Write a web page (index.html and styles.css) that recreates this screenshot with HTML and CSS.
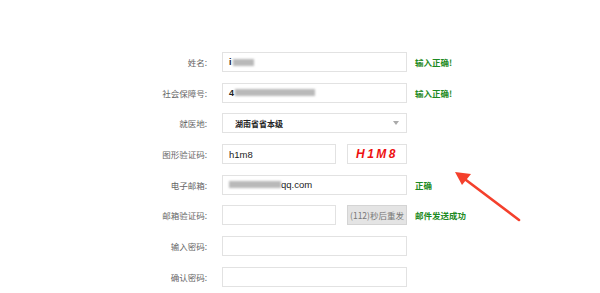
FILE: index.html
```html
<!DOCTYPE html>
<html lang="zh">
<head>
<meta charset="utf-8">
<link rel="stylesheet" href="styles.css">
</head>
<body>
<div class="page">
  <form class="form">
    <div class="row">
      <label class="lbl">姓名:</label>
      <div class="field"><span class="dark">i</span><span class="blur" style="width:21px"></span></div>
      <span class="msg">输入正确!</span>
    </div>
    <div class="row">
      <label class="lbl">社会保障号:</label>
      <div class="field"><span class="dark">4</span><span class="blur" style="width:80px"></span></div>
      <span class="msg">输入正确!</span>
    </div>
    <div class="row">
      <label class="lbl">就医地:</label>
      <div class="field select"><span class="sel-text">湖南省省本级</span><span class="caret"></span></div>
      <span></span>
    </div>
    <div class="row">
      <label class="lbl">图形验证码:</label>
      <div class="split">
        <div class="field short"><span class="val">h1m8</span></div>
        <div class="captcha">H1M8</div>
      </div>
      <span></span>
    </div>
    <div class="row">
      <label class="lbl">电子邮箱:</label>
      <div class="field"><span class="blur" style="width:52px"></span><span class="val">qq.com</span></div>
      <span class="msg">正确</span>
    </div>
    <div class="row">
      <label class="lbl">邮箱验证码:</label>
      <div class="split">
        <div class="field short"></div>
        <div class="resend">(112)秒后重发</div>
      </div>
      <span class="msg">邮件发送成功</span>
    </div>
    <div class="row">
      <label class="lbl">输入密码:</label>
      <div class="field"></div>
      <span></span>
    </div>
    <div class="row">
      <label class="lbl">确认密码:</label>
      <div class="field"></div>
      <span></span>
    </div>
  </form>
  <svg class="arrow" width="600" height="293" viewBox="0 0 600 293">
    <line x1="519" y1="220" x2="462" y2="177" stroke="#f4402c" stroke-width="2.6" stroke-linecap="round"/>
    <polygon points="455,172 471,174 462,185" fill="#f4402c"/>
  </svg>
</div>
</body>
</html>
```
FILE: styles.css
```css
* { box-sizing: border-box; }
html, body { margin: 0; padding: 0; background: #fff; }
body { font-family: "Microsoft YaHei", "Noto Sans CJK SC", "Liberation Sans", sans-serif; }
.page { position: relative; width: 600px; height: 293px; overflow: hidden; }
.form {
  display: grid;
  grid-template-columns: 207px 200px 120px;
  row-gap: 10.7px;
  padding-top: 52px;
}
.row { display: contents; }
.lbl {
  height: 20px;
  display: flex; align-items: center; justify-content: flex-end;
  font-size: 8.5px; color: #666;
}
.row > .field, .row > .split { margin-left: 15px; }
.field {
  height: 20px;
  border: 1px solid #e2e2e2;
  background: #fff;
  display: flex; align-items: center;
  padding-left: 6px;
  font-family: "Liberation Sans", "Noto Sans CJK SC", sans-serif;
  font-size: 10px; color: #222;
}
.field.short { width: 114px; }
.split { display: flex; gap: 11px; height: 20px; }
.dark { font-size: 9px; font-weight: bold; color: #222; margin-right: 1px; }
.blur { display: inline-block; height: 7px; background: #b9b9b9; filter: blur(1.2px); }
.val { font-size: 9.5px; color: #222; }
.msg {
  height: 20px;
  display: flex; align-items: center;
  margin-left: 8px;
  font-size: 8.5px; font-weight: bold; color: #1d8a22;
  white-space: nowrap;
}
.select { justify-content: space-between; padding-left: 12px; padding-right: 7px; }
.sel-text { font-size: 8px; font-weight: bold; color: #222; font-family: "Noto Sans CJK SC", sans-serif; }
.caret { width: 0; height: 0; border-left: 3px solid transparent; border-right: 3px solid transparent; border-top: 4px solid #aaa; }
.captcha {
  width: 60px; height: 20px;
  border: 1px solid #e2e2e2;
  display: flex; align-items: center; justify-content: center;
  font-family: "Liberation Sans", sans-serif;
  font-size: 12px; font-weight: bold; font-style: italic;
  color: #ee1111; letter-spacing: 2.5px;
}
.resend {
  width: 60px; height: 20px;
  border: 1px solid #d4d4d4;
  background: #e4e4e4;
  display: flex; align-items: center; justify-content: center;
  font-size: 8.5px; color: #777; white-space: nowrap;
}
.arrow { position: absolute; left: 0; top: 0; pointer-events: none; }
```
